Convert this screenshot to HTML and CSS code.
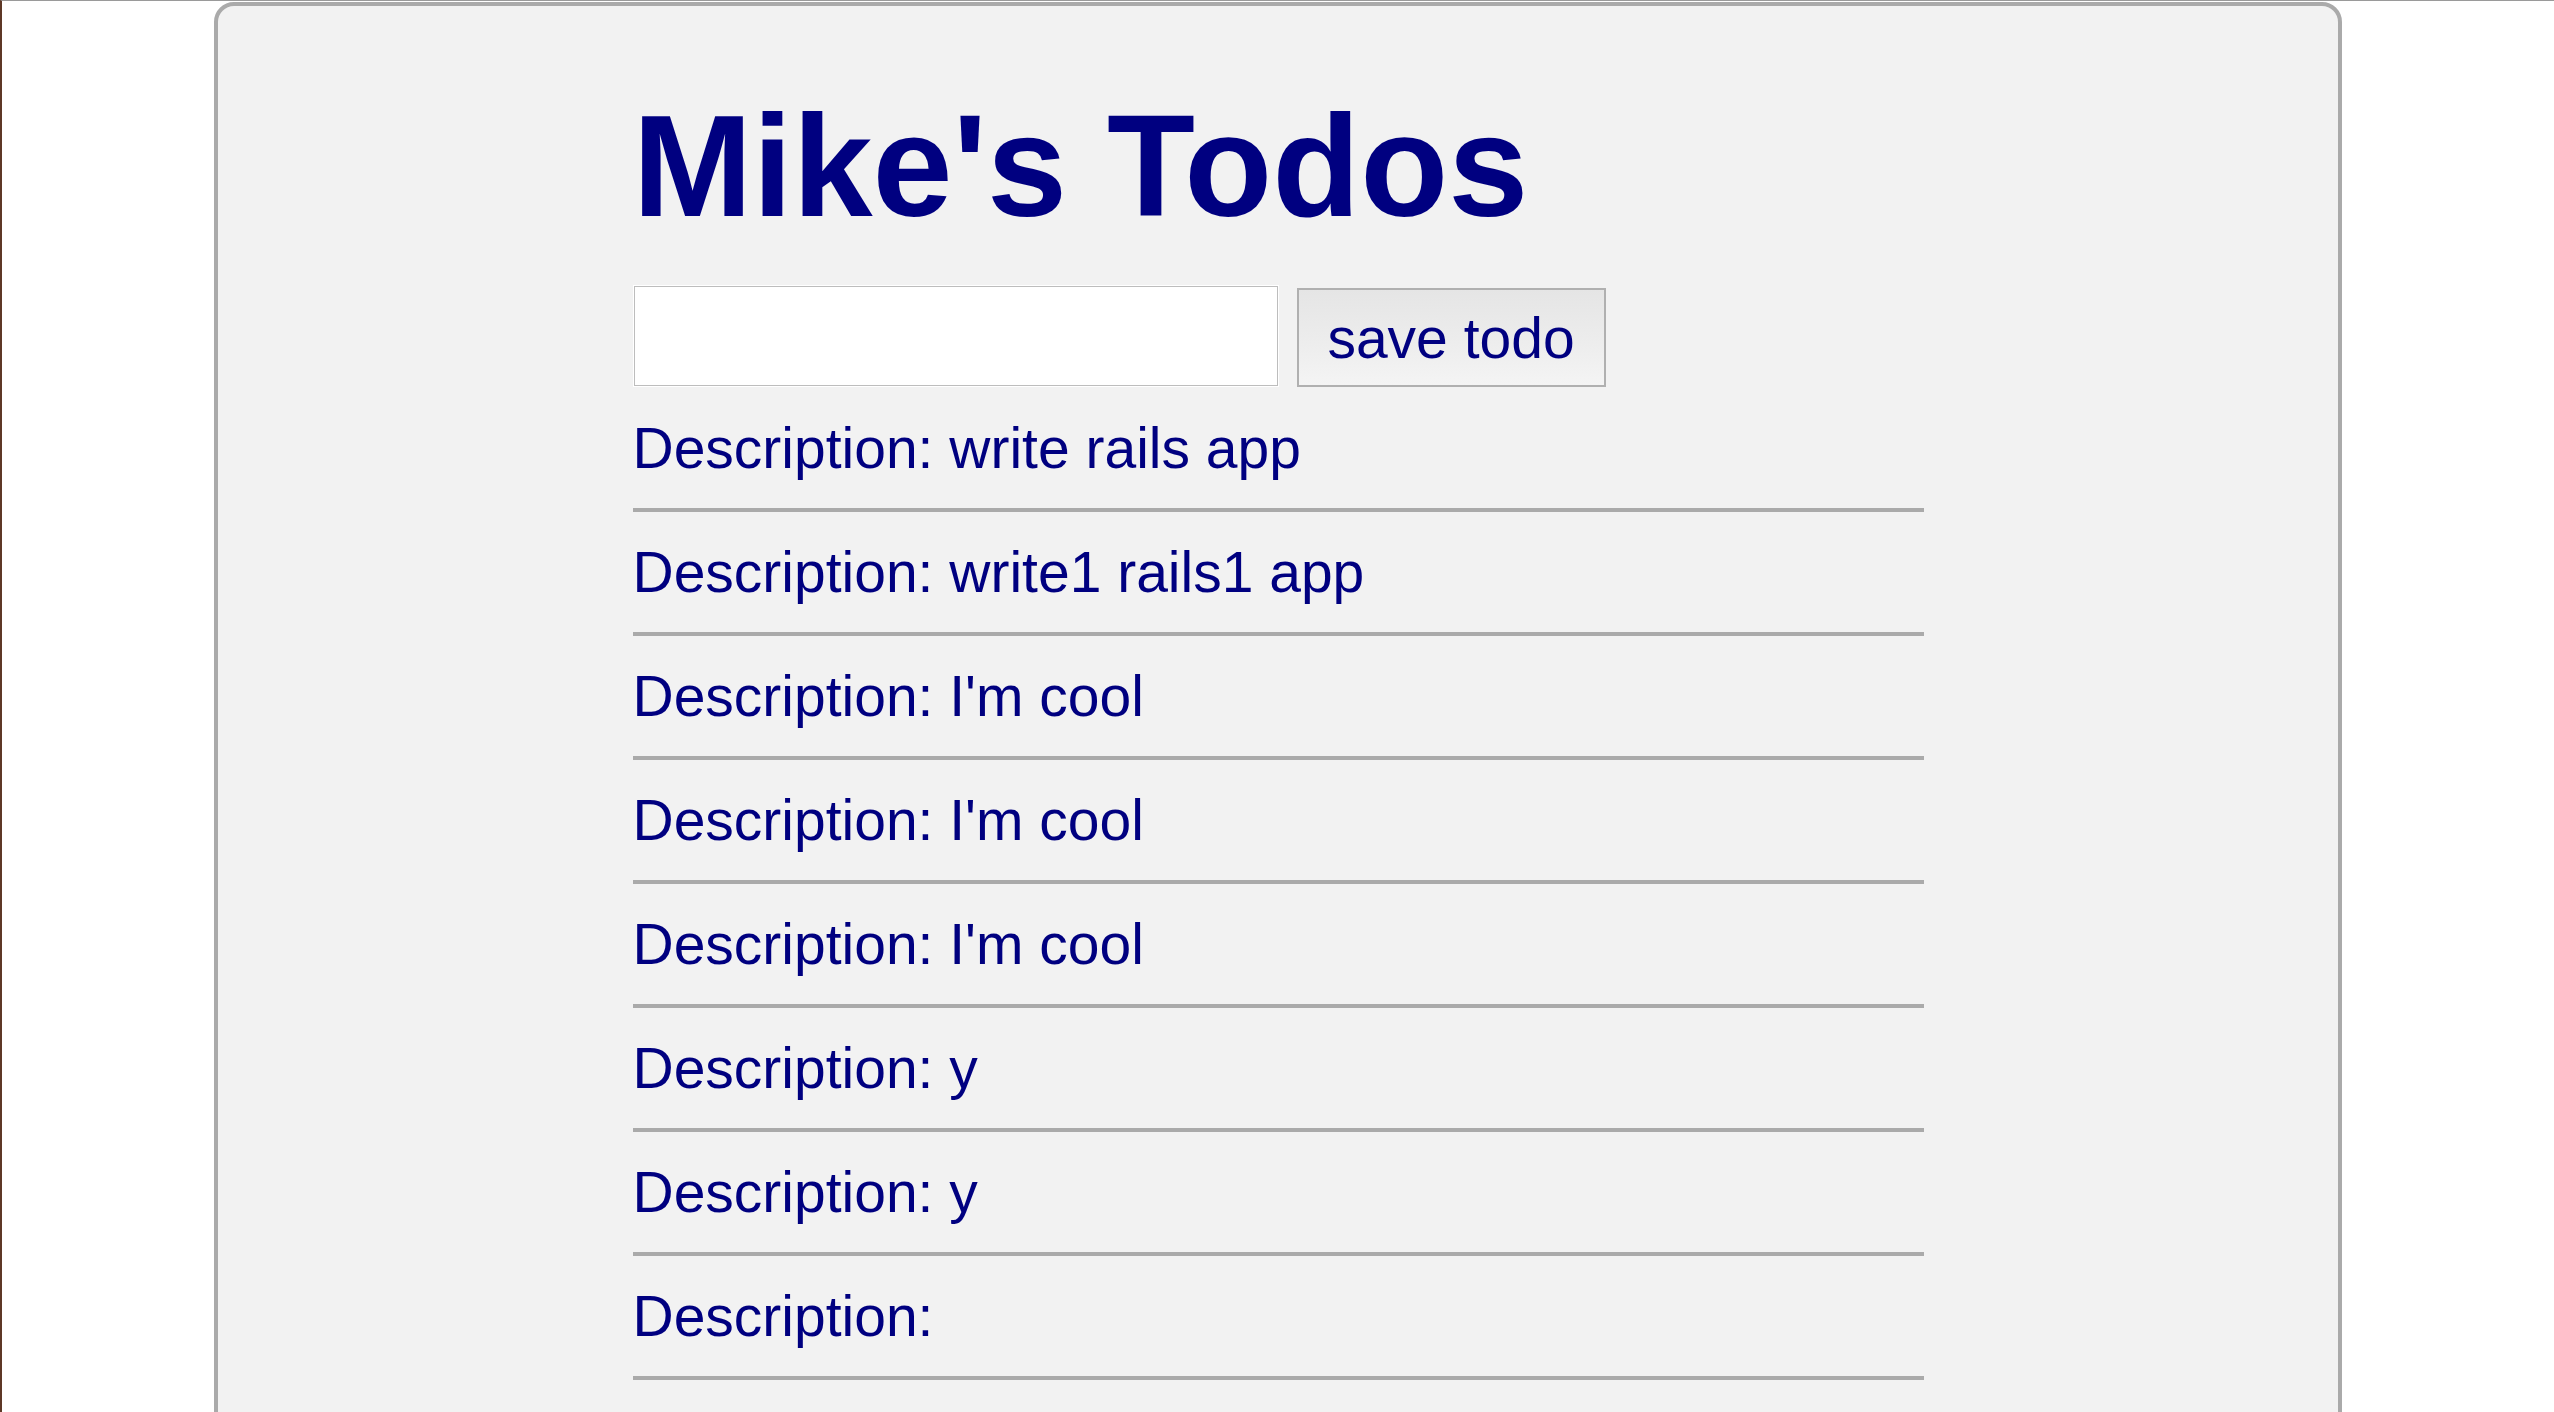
FILE: index.html
```html
<!DOCTYPE html>
<html lang="en">
<head>
<meta charset="utf-8">
<title>Mike's Todos</title>
<link rel="stylesheet" href="styles.css">
</head>
<body>
<div class="page">
  <div class="panel">
    <div class="content">
      <h1 class="title">Mike's Todos</h1>
      <form class="todo-form">
        <input class="todo-input" type="text">
        <button class="save-btn" type="button">save todo</button>
      </form>
      <ul class="todo-list">
        <li class="todo-item">Description: write rails app</li>
        <li class="todo-item">Description: write1 rails1 app</li>
        <li class="todo-item">Description: I'm cool</li>
        <li class="todo-item">Description: I'm cool</li>
        <li class="todo-item">Description: I'm cool</li>
        <li class="todo-item">Description: y</li>
        <li class="todo-item">Description: y</li>
        <li class="todo-item">Description: </li>
      </ul>
    </div>
  </div>
</div>
</body>
</html>
```

FILE: styles.css
```css
html, body {
  margin: 0;
  padding: 0;
  background: #ffffff;
}

body {
  font-family: "Liberation Sans", Arial, Helvetica, sans-serif;
  color: #000080;
}

.page {
  border-top: 1px solid #9a9a9a;
  border-left: 2px solid #5e3826;
  padding-top: 1px;
  min-height: 1500px;
  box-sizing: border-box;
}

.panel {
  box-sizing: border-box;
  width: 2128px;
  margin: 0 auto;
  background: #f2f2f2;
  border: 4px solid #aaaaaa;
  border-radius: 20px;
  padding: 76px 0 120px;
}

.content {
  width: 1291px;
  margin: 0 auto;
}

.title {
  margin: 0 0 34px;
  font-size: 144px;
  line-height: 170px;
  font-weight: bold;
  color: #000080;
}

.todo-form {
  display: flex;
  align-items: flex-start;
  gap: 19px;
  margin: 0 0 1px;
}

.todo-input {
  box-sizing: border-box;
  width: 644px;
  height: 100px;
  margin: 0 0 0 1px;
  border: 1px solid #bdbdbd;
  box-shadow: 0 0 0 1px #ffffff;
  background: #ffffff;
  padding: 0 10px;
  font-family: "Liberation Sans", Arial, sans-serif;
  font-size: 57px;
  border-radius: 0;
}

.save-btn {
  box-sizing: border-box;
  width: 309px;
  height: 99px;
  margin-top: 2px;
  padding: 0;
  border: 2px solid #b0b0b0;
  border-radius: 0;
  background: linear-gradient(to bottom, #e5e5e5 0%, #ececec 50%, #f4f4f4 100%);
  color: #000080;
  font-family: "Liberation Sans", Arial, sans-serif;
  font-size: 57px;
  line-height: 64px;
  text-align: center;
}

.todo-list {
  list-style: none;
  margin: 0;
  padding: 0;
}

.todo-item {
  font-size: 57px;
  line-height: 64px;
  padding: 28px 0;
  border-bottom: 4px solid #aaaaaa;
  white-space: pre;
}
```
